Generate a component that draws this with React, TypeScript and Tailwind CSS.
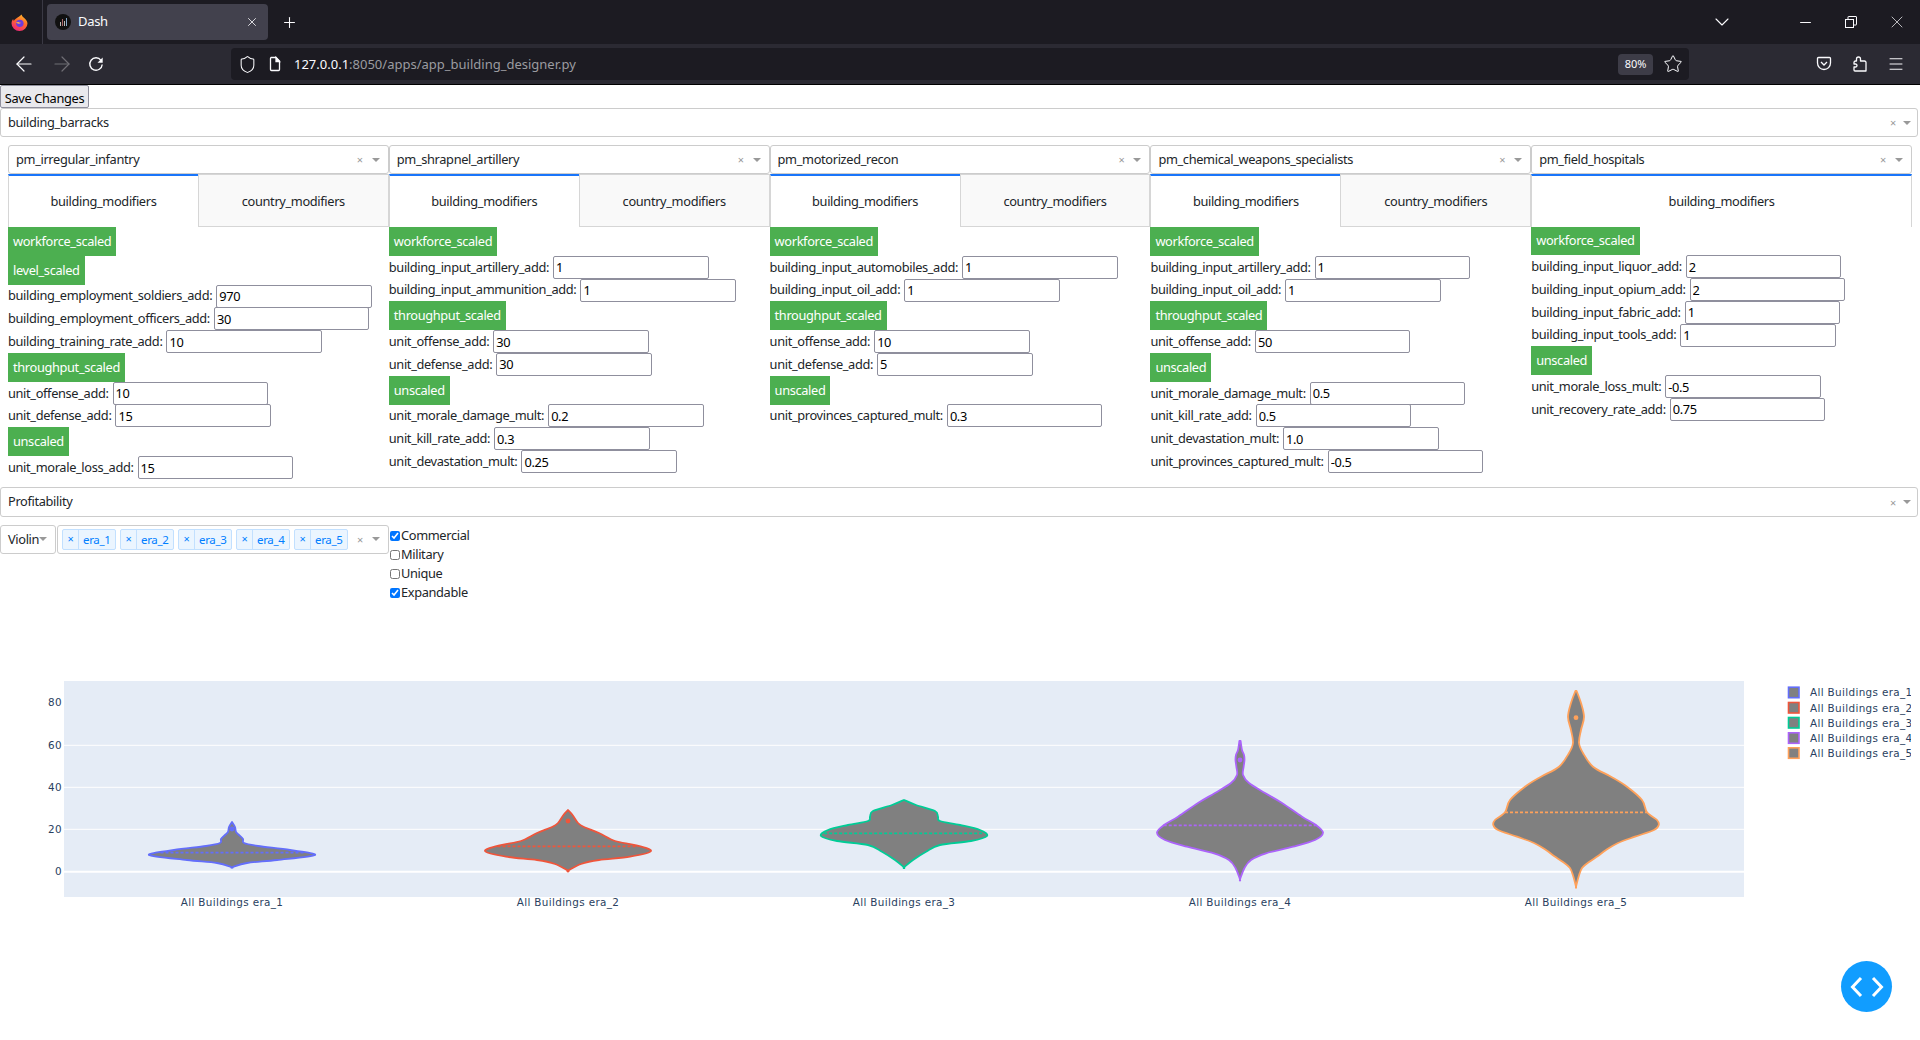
import { ArrowLeft, ArrowRight, ChevronDown, Menu, Minus, Plus, Shield, Star, X } from 'lucide-react';

interface Field {
  label: string;
  value: string;
}

interface Group {
  title: string;
  fields: Field[];
}

interface Column {
  pm: string;
  single?: boolean;
  groups: Group[];
}

const columns: Column[] = [
  {
    pm: 'pm_irregular_infantry',
    groups: [
      { title: 'workforce_scaled', fields: [] },
      {
        title: 'level_scaled',
        fields: [
          { label: 'building_employment_soldiers_add', value: '970' },
          { label: 'building_employment_officers_add', value: '30' },
          { label: 'building_training_rate_add', value: '10' },
        ],
      },
      {
        title: 'throughput_scaled',
        fields: [
          { label: 'unit_offense_add', value: '10' },
          { label: 'unit_defense_add', value: '15' },
        ],
      },
      { title: 'unscaled', fields: [{ label: 'unit_morale_loss_add', value: '15' }] },
    ],
  },
  {
    pm: 'pm_shrapnel_artillery',
    groups: [
      {
        title: 'workforce_scaled',
        fields: [
          { label: 'building_input_artillery_add', value: '1' },
          { label: 'building_input_ammunition_add', value: '1' },
        ],
      },
      {
        title: 'throughput_scaled',
        fields: [
          { label: 'unit_offense_add', value: '30' },
          { label: 'unit_defense_add', value: '30' },
        ],
      },
      {
        title: 'unscaled',
        fields: [
          { label: 'unit_morale_damage_mult', value: '0.2' },
          { label: 'unit_kill_rate_add', value: '0.3' },
          { label: 'unit_devastation_mult', value: '0.25' },
        ],
      },
    ],
  },
  {
    pm: 'pm_motorized_recon',
    groups: [
      {
        title: 'workforce_scaled',
        fields: [
          { label: 'building_input_automobiles_add', value: '1' },
          { label: 'building_input_oil_add', value: '1' },
        ],
      },
      {
        title: 'throughput_scaled',
        fields: [
          { label: 'unit_offense_add', value: '10' },
          { label: 'unit_defense_add', value: '5' },
        ],
      },
      { title: 'unscaled', fields: [{ label: 'unit_provinces_captured_mult', value: '0.3' }] },
    ],
  },
  {
    pm: 'pm_chemical_weapons_specialists',
    groups: [
      {
        title: 'workforce_scaled',
        fields: [
          { label: 'building_input_artillery_add', value: '1' },
          { label: 'building_input_oil_add', value: '1' },
        ],
      },
      { title: 'throughput_scaled', fields: [{ label: 'unit_offense_add', value: '50' }] },
      {
        title: 'unscaled',
        fields: [
          { label: 'unit_morale_damage_mult', value: '0.5' },
          { label: 'unit_kill_rate_add', value: '0.5' },
          { label: 'unit_devastation_mult', value: '1.0' },
          { label: 'unit_provinces_captured_mult', value: '-0.5' },
        ],
      },
    ],
  },
  {
    pm: 'pm_field_hospitals',
    single: true,
    groups: [
      {
        title: 'workforce_scaled',
        fields: [
          { label: 'building_input_liquor_add', value: '2' },
          { label: 'building_input_opium_add', value: '2' },
          { label: 'building_input_fabric_add', value: '1' },
          { label: 'building_input_tools_add', value: '1' },
        ],
      },
      {
        title: 'unscaled',
        fields: [
          { label: 'unit_morale_loss_mult', value: '-0.5' },
          { label: 'unit_recovery_rate_add', value: '0.75' },
        ],
      },
    ],
  },
];

interface Violin {
  name: string;
  color: string;
  cx: number;
  mean: number;
  dot?: number;
  // [y, half width] from top to bottom
  shape: [number, number][];
}

const violins: Violin[] = [
  {
    name: 'All Buildings era_1',
    color: '#636efa',
    cx: 232,
    mean: 852.7,
    dot: 829,
    shape: [[822, 0], [827, 3], [832, 4], [835, 7], [839, 11], [843, 12], [846, 26], [850, 58], [855, 83], [860, 45], [863, 15], [867.3, 0]],
  },
  {
    name: 'All Buildings era_2',
    color: '#ef553b',
    cx: 568,
    mean: 846.3,
    dot: 821,
    shape: [[810, 0], [815, 4.5], [823, 10], [827, 16], [833, 31], [841, 47], [845, 67], [851, 83], [856.7, 62], [860, 31], [864, 13], [870.7, 0]],
  },
  {
    name: 'All Buildings era_3',
    color: '#00cc96',
    cx: 904,
    mean: 833.3,
    shape: [[800, 0], [805, 12], [811, 31], [816.7, 34], [821, 36], [825, 56], [830, 76], [836, 83], [841, 67], [845, 36], [851.7, 22], [860, 9], [867.3, 0]],
  },
  {
    name: 'All Buildings era_4',
    color: '#ab63fa',
    cx: 1240,
    mean: 825.3,
    dot: 760,
    shape: [[741, 0.6], [750, 2], [755, 4], [760, 4.5], [767, 3.6], [775, 3], [783, 9], [793, 25], [803, 42], [816.7, 62], [825, 76], [832.7, 83], [840, 75], [846.7, 53], [853.3, 26], [860, 11], [868, 4.5], [879.3, 0]],
  },
  {
    name: 'All Buildings era_5',
    color: '#ffa15a',
    cx: 1576,
    mean: 812.3,
    dot: 717.7,
    shape: [[691, 0.6], [703, 5], [717, 8], [730, 5], [743, 3], [753, 7], [766.7, 17], [776.7, 35], [786.7, 51], [800, 66], [812.3, 71], [820, 81], [825, 82.7], [830, 78], [836.7, 59], [843, 42], [850, 30], [856, 22], [862, 13], [868, 6], [877, 2.5], [886.7, 0]],
  },
];

// catmull-rom through the outline points
function violinPath(v: Violin) {
  const pts: [number, number][] = [
    ...v.shape.map(([y, w]): [number, number] => [v.cx - w, y]),
    ...[...v.shape].reverse().map(([y, w]): [number, number] => [v.cx + w, y]),
  ];
  let d = `M${pts[0][0]},${pts[0][1]}`;
  for (let i = 0; i < pts.length - 1; i++) {
    const p0 = pts[Math.max(i - 1, 0)];
    const p1 = pts[i];
    const p2 = pts[i + 1];
    const p3 = pts[Math.min(i + 2, pts.length - 1)];
    const c1x = p1[0] + (p2[0] - p0[0]) / 6;
    const c1y = p1[1] + (p2[1] - p0[1]) / 6;
    const c2x = p2[0] - (p3[0] - p1[0]) / 6;
    const c2y = p2[1] - (p3[1] - p1[1]) / 6;
    d += `C${c1x},${c1y} ${c2x},${c2y} ${p2[0]},${p2[1]}`;
  }
  return d + 'Z';
}

function halfWidthAt(v: Violin, y: number) {
  for (let i = 0; i < v.shape.length - 1; i++) {
    const [y0, w0] = v.shape[i];
    const [y1, w1] = v.shape[i + 1];
    if (y >= y0 && y <= y1) return w0 + ((w1 - w0) * (y - y0)) / (y1 - y0);
  }
  return 0;
}

function Caret() {
  return <span className="h-0 w-0 border-x-[4px] border-t-[4px] border-x-transparent border-t-[#999]" />;
}

function ClearAndCaret({ wide }: { wide?: boolean }) {
  return (
    <>
      <span className={`${wide ? 'mr-[7px]' : 'mr-[9px]'} text-[11px] leading-none text-[#999]`}>×</span>
      <span className={`${wide ? 'mr-[6px]' : 'mr-[8px]'} flex items-center`}>
        <Caret />
      </span>
    </>
  );
}

function Dropdown({ value, className, wide }: { value: string; className: string; wide?: boolean }) {
  return (
    <div className={`flex items-center rounded-[3px] border border-[#ccc] bg-white pl-[7px] ${className}`}>
      <span className="flex-1 truncate">{value}</span>
      <ClearAndCaret wide={wide} />
    </div>
  );
}

function Tag({ children }: { children: string }) {
  return <div className="flex h-[28.8px] w-fit shrink-0 items-center bg-[#4caf50] px-[5px] text-white">{children}</div>;
}

function FieldRow({ label, value }: Field) {
  return (
    <div className="flex h-[22.8px] items-center gap-[4px] whitespace-nowrap">
      <span>{label}:</span>
      <input
        readOnly
        defaultValue={value}
        className="h-[23px] w-[155.5px] shrink-0 rounded-[2px] border border-[#8f8f9d] bg-white px-[2px] text-black outline-none"
      />
    </div>
  );
}

function PmColumn({ column }: { column: Column }) {
  return (
    <div className="flex min-w-0 flex-1 flex-col">
      <Dropdown value={column.pm} className="h-[29px] shrink-0" />
      {column.single ? (
        <div className="flex h-[52.5px] shrink-0 items-center justify-center border-x border-t-2 border-x-[#d6d6d6] border-t-[#1975fa] pt-[1px]">
          building_modifiers
        </div>
      ) : (
        <div className="flex h-[53px] shrink-0">
          <div className="flex flex-1 items-center justify-center border-l border-t-2 border-l-[#d6d6d6] border-t-[#1975fa]">
            building_modifiers
          </div>
          <div className="flex flex-1 items-center justify-center border border-[#d6d6d6] bg-[#f9f9f9] pt-[2px]">
            country_modifiers
          </div>
        </div>
      )}
      {column.groups.map((g) => (
        <div key={g.title}>
          <Tag>{g.title}</Tag>
          {g.fields.map((f) => (
            <FieldRow key={f.label} {...f} />
          ))}
        </div>
      ))}
    </div>
  );
}

function Chrome() {
  return (
    <div className="font-['Noto_Sans',sans-serif] tracking-normal text-[#fbfbfe]">
      <div className="flex h-[44px] items-center bg-[#1c1b22]">
        <div className="flex h-full w-[43px] items-center justify-center border-r border-[#3a3944] pr-[3px]">
          <svg width="17" height="17" viewBox="0 0 16 16">
            <defs>
              <linearGradient id="fx" x1="0.8" y1="0" x2="0.3" y2="1">
                <stop offset="0" stopColor="#ffbf2b" />
                <stop offset="0.45" stopColor="#ff6a2b" />
                <stop offset="1" stopColor="#f0257a" />
              </linearGradient>
            </defs>
            <path d="M10 .5c.3 1.800 1.700 2.400 2.700 3.500C14.300 5.500 15.500 7 15.500 9a7.500 7 0 0 1-15 0c0-1.800.6-3.200 1.500-4.300 0 .8.300 1.400.8 1.800C3.500 4.500 7 3.500 10 .5z" fill="url(#fx)" />
            <circle cx="8.300" cy="8.800" r="3.500" fill="#6d3be0" />
            <path d="M4.800 7.800c1 1.800 3.500 1.700 4.800.4-.9.200-1.900 0-2.600-.7z" fill="#ffb53d" />
          </svg>
        </div>
        <div className="ml-[4px] flex h-[36px] w-[221px] items-center rounded-[4px] bg-[#42414d] pl-[8px] pr-[9px]">
          <span className="flex h-[16px] w-[16px] items-end justify-center gap-[1px] rounded-full bg-[#111] pb-[4px]">
            <span className="h-[4px] w-[1px] bg-[#bbb]" />
            <span className="h-[7px] w-[1px] bg-[#a66]" />
            <span className="h-[5px] w-[1px] bg-[#bbb]" />
            <span className="h-[8px] w-[1px] bg-[#8ac]" />
          </span>
          <span className="ml-[7px] flex-1 text-[13px] tracking-[-0.3px]">Dash</span>
          <X size={14} strokeWidth={1.4} />
        </div>
        <Plus size={17} strokeWidth={1.5} className="ml-[13px]" />
        <div className="flex-1" />
        <ChevronDown size={24} strokeWidth={1.1} className="mr-[62.5px]" />
        <Minus size={17} strokeWidth={1.4} className="mr-[31.5px]" />
        <svg width="12" height="12" viewBox="0 0 12 12" fill="none" stroke="currentColor" className="mr-[30px]">
          <rect x="0.500" y="3.500" width="8" height="8" />
          <path d="M3 3.500v-2.500a.5.5 0 0 1 .5-.5h7.500a.5.5 0 0 1 .5.5v7.500a.5.5 0 0 1-.5.5h-2.500" />
        </svg>
        <X size={20} strokeWidth={0.85} className="mr-[13px]" />
      </div>
      <div className="flex h-[41px] items-center border-b border-black bg-[#2b2a33]">
        <ArrowLeft size={24} strokeWidth={1.2} className="ml-[12px]" />
        <ArrowRight size={24} strokeWidth={1.2} className="ml-[14px] text-[#6f6e75]" />
        <svg width="16" height="16" viewBox="0 0 16 16" fill="none" stroke="currentColor" strokeWidth="1.4" className="ml-[14px]">
          <path d="M13 4.300a6.200 6.200 0 1 0 1.200 4.200" />
          <path d="M14.700 1.500v5.200h-5.200z" fill="currentColor" stroke="none" />
        </svg>
        <div className="ml-[127px] flex h-[32px] w-[1458px] shrink-0 items-center rounded-[4px] bg-[#1c1b22] pl-[6.5px]">
          <Shield size={19} strokeWidth={1.3} />
          <svg width="16" height="16" viewBox="0 0 16 16" fill="none" stroke="currentColor" strokeWidth="1.3" className="ml-[10.5px]">
            <path d="M4 1.500h5l3.500 3.500v8.500a1 1 0 0 1-1 1h-7a1 1 0 0 1-1-1v-11a1 1 0 0 1 .5-1z" />
            <path d="M9 1.500v4h3.500z" fill="currentColor" />
          </svg>
          <span className="ml-[11px] flex-1 pt-[1px] text-[13px]">
            127.0.0.1<span className="text-[#9b9ba0]">:8050/apps/app_building_designer.py</span>
          </span>
          <span className="flex h-[21px] w-[35px] items-center justify-center rounded-[4px] bg-[#3d3c47] text-[11px]">80%</span>
          <Star size={20} strokeWidth={1.2} className="ml-[9.7px] mr-[6.3px]" />
        </div>
        <svg width="16" height="16" viewBox="0 0 16 16" fill="none" stroke="currentColor" strokeWidth="1.3" className="ml-[127px]">
          <path d="M2.500 1.500h11a1 1 0 0 1 1 1v4.500a6.500 6.500 0 0 1-13 0V2.500a1 1 0 0 1 1-1z" />
          <path d="M5 6l3 3 3-3" />
        </svg>
        <svg width="16" height="16" viewBox="0 0 16 16" fill="none" stroke="currentColor" strokeWidth="1.3" strokeLinejoin="round" className="ml-[20px]">
          <path d="M6.500 1a2 2 0 0 1 2 2v2H12.500a1.500 1.500 0 0 1 1.500 1.500V15H3a1 1 0 0 1-1-1v-3h1.500a1.500 1.500 0 0 0 0-3H2V6.500A1.500 1.500 0 0 1 3.500 5h1V3a2 2 0 0 1 2-2z" />
        </svg>
        <Menu size={18} strokeWidth={1.3} className="ml-[19px]" />
      </div>
    </div>
  );
}

function Chart() {
  const yticks = [
    { v: '80', y: 702.9, line: false },
    { v: '60', y: 745.3, line: true },
    { v: '40', y: 787.3, line: true },
    { v: '20', y: 829.3, line: true },
    { v: '0', y: 871.7, line: true },
  ];
  const top = 640;
  return (
    <svg width="1920" height="300" viewBox={`0 ${top} 1920 300`} className="block font-['DejaVu_Sans',sans-serif] tracking-[0.35px]">
      <defs>
        <clipPath id="legend-clip">
          <rect x="1780" y="680" width="131" height="90" />
        </clipPath>
      </defs>
      <rect x="64" y="681" width="1680" height="216" fill="#e5ecf6" />
      {yticks.map((t) => (
        <g key={t.v}>
          {t.line && (
            <line x1="64" x2="1744" y1={t.y} y2={t.y} stroke="#fff" strokeWidth={t.v === '0' ? 2 : 1} />
          )}
          <text x="62" y={t.y + 3.500} textAnchor="end" fontSize="10.4" fill="#2a3f5f">
            {t.v}
          </text>
        </g>
      ))}
      {violins.map((v) => {
        const w = halfWidthAt(v, v.mean);
        return (
          <g key={v.name}>
            <path d={violinPath(v)} fill="#808080" stroke={v.color} strokeWidth="1.8" strokeLinejoin="round" />
            <line x1={v.cx - w} x2={v.cx + w} y1={v.mean} y2={v.mean} stroke={v.color} strokeWidth="1.8" strokeDasharray="3 2" />
            {v.dot && <circle cx={v.cx} cy={v.dot} r="2.400" fill={v.color} />}
            <text x={v.cx} y="906" textAnchor="middle" fontSize="10.4" fill="#2a3f5f">
              {v.name}
            </text>
          </g>
        );
      })}
      <g clipPath="url(#legend-clip)">
        {violins.map((v, i) => {
          const ys = [692.7, 708, 723, 738.3, 753.3];
          return (
            <g key={v.name}>
              <rect x="1788.500" y={ys[i] - 5.500} width="10.500" height="10.500" fill="#808080" stroke={v.color} strokeWidth="1.600" />
              <text x="1810" y={ys[i] + 3.500} fontSize="10.4" fill="#2a3f5f">
                {v.name}
              </text>
            </g>
          );
        })}
      </g>
    </svg>
  );
}

export default function App() {
  const eras = ['era_1', 'era_2', 'era_3', 'era_4', 'era_5'];
  const checks = [
    { label: 'Commercial', on: true },
    { label: 'Military', on: false },
    { label: 'Unique', on: false },
    { label: 'Expandable', on: true },
  ];

  return (
    <div className="relative h-[1040px] overflow-hidden bg-white font-['Noto_Sans',sans-serif] text-[12.8px] tracking-[-0.35px] text-[#212529]">
      <Chrome />
      <button className="block h-[23px] w-[89px] rounded-[2px] border border-[#8f8f9d] bg-[#e9e9ed] pt-[3px] text-black">
        Save Changes
      </button>
      <Dropdown wide value="building_barracks" className="h-[29px] w-[1918px]" />
      <div className="mt-[8px] flex h-[342px] px-[8px]">
        {columns.map((c) => (
          <PmColumn key={c.pm} column={c} />
        ))}
      </div>
      <Dropdown wide value="Profitability" className="h-[30px] w-[1918px]" />
      <div className="mt-[8px] flex h-[115px] items-start">
        <div className="flex h-[28.500px] w-[56px] shrink-0 items-center rounded-[3px] border border-[#ccc] pl-[7px]">
          Violin
          <Caret />
        </div>
        <div className="ml-[1px] flex h-[28.500px] w-[332px] shrink-0 items-center rounded-[3px] border border-[#ccc] pl-[4px]">
          <div className="flex flex-1 gap-[4px]">
            {eras.map((e) => (
              <div key={e} className="flex h-[21px] w-[54px] items-center rounded-[2px] border border-[#c2e0ff] bg-[#ebf5ff] text-[11.5px] text-[#007eff]">
                <span className="flex h-full w-[16px] items-center justify-center border-r border-[#c2e0ff] text-[11px]">×</span>
                <span className="ml-[4px]">{e}</span>
              </div>
            ))}
          </div>
          <ClearAndCaret />
        </div>
        <div className="ml-[1px] flex flex-col pt-[1px]">
          {checks.map((c) => (
            <label key={c.label} className="flex h-[19px] items-center">
              <input type="checkbox" readOnly checked={c.on} className="mr-[1px] h-[10px] w-[10px] accent-[#0075ff]" />
              {c.label}
            </label>
          ))}
        </div>
      </div>
      <Chart />
      <button className="absolute left-[1841px] top-[961px] flex h-[51px] w-[51px] items-center justify-center rounded-full bg-[#119dff] text-white">
        <svg width="36" height="24" viewBox="0 0 36 24" fill="none" stroke="currentColor" strokeWidth="3">
          <path d="M12 3l-8.500 9 8.500 9" />
          <path d="M24 3l8.500 9-8.500 9" />
        </svg>
      </button>
    </div>
  );
}
